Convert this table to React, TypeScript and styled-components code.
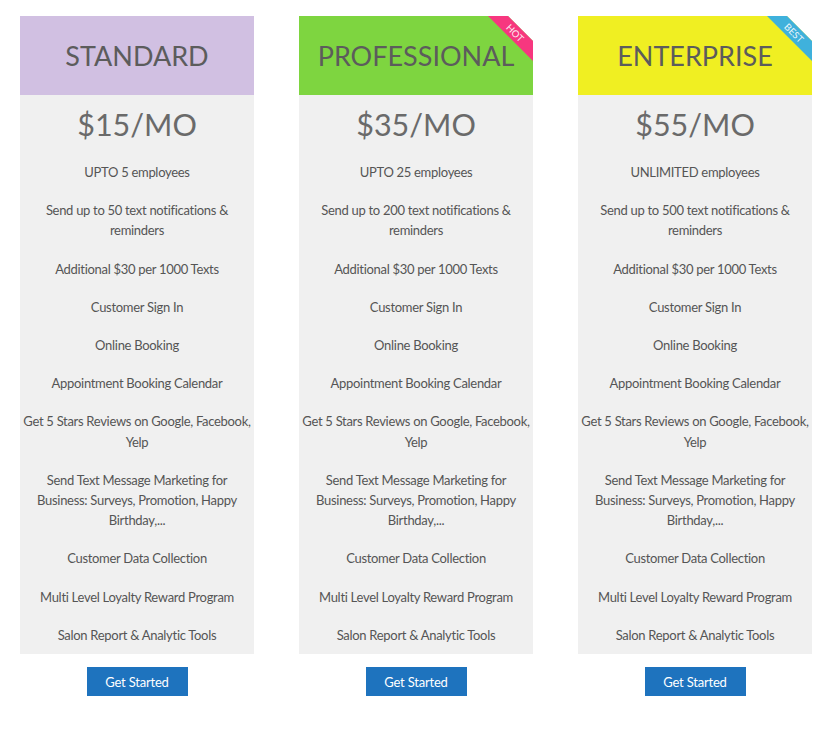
import React from "react";
import styled, { createGlobalStyle } from "styled-components";

const Global = createGlobalStyle`
  html, body { margin: 0; padding: 0; background: #fff; }
  body { font-family: Lato, "Open Sans", "Liberation Sans", sans-serif; }
`;

const Page = styled.div`
  display: grid;
  grid-template-columns: repeat(3, 234px);
  column-gap: 45px;
  padding: 16px 19px 0 20px;
  align-items: start;
`;

const Column = styled.div`
  display: flex;
  flex-direction: column;
  align-items: center;
`;

const Header = styled.div<{ $bg: string }>`
  position: relative;
  width: 100%;
  height: 79px;
  background: ${(p) => p.$bg};
  display: flex;
  align-items: center;
  justify-content: center;
  color: #5c5c5c;
  font-size: 27px;
`;

const Ribbon = styled.svg`
  position: absolute;
  top: 0;
  right: 0;
  width: 45px;
  height: 45px;
`;

const Body = styled.div`
  width: 100%;
  background: #f0f0f0;
  display: flex;
  flex-direction: column;
  align-items: center;
`;

const Price = styled.div`
  height: 58px;
  display: flex;
  align-items: center;
  justify-content: center;
  font-size: 30.5px;
  color: #6a6a6a;
`;

const Features = styled.ul`
  list-style: none;
  margin: 0;
  padding: 0;
  width: 100%;
`;

const Feature = styled.li`
  padding: 9px 0;
  font-size: 13px;
  letter-spacing: -0.3px;
  line-height: 20.2px;
  color: #555;
  text-align: center;
  white-space: nowrap;
`;

const Button = styled.button`
  margin-top: 13px;
  width: 101px;
  height: 29px;
  border: none;
  background: #1e73be;
  color: #fff;
  font-family: Lato, "Open Sans", sans-serif;
  font-size: 13px;
  letter-spacing: -0.2px;
  padding: 0;
  cursor: pointer;
`;

type Plan = {
  name: string;
  bg: string;
  price: string;
  employees: string;
  texts: string;
  ribbon?: { label: string; color: string };
};

const plans: Plan[] = [
  { name: "STANDARD", bg: "#d1c0e2", price: "$15/MO", employees: "UPTO 5 employees", texts: "50" },
  {
    name: "PROFESSIONAL",
    bg: "#7ed540",
    price: "$35/MO",
    employees: "UPTO 25 employees",
    texts: "200",
    ribbon: { label: "HOT", color: "#f7377f" },
  },
  {
    name: "ENTERPRISE",
    bg: "#f0ef22",
    price: "$55/MO",
    employees: "UNLIMITED employees",
    texts: "500",
    ribbon: { label: "BEST", color: "#3fb1dc" },
  },
];

function CornerRibbon({ label, color }: { label: string; color: string }) {
  return (
    <Ribbon viewBox="0 0 45 45">
      <polygon points="20,0 45,0 45,25" fill="#ffffff" />
      <polygon points="0,0 20,0 45,25 45,45" fill={color} />
      <text
        x="0"
        y="0"
        transform="translate(27 17) rotate(45)"
        textAnchor="middle"
        dominantBaseline="central"
        fill="#ffffff"
        fontSize="9.5"
        fontFamily="Lato, sans-serif"
        opacity="0.9"
      >
        {label}
      </text>
    </Ribbon>
  );
}

export default function App() {
  return (
    <>
      <Global />
      <Page>
        {plans.map((p) => (
          <Column key={p.name}>
            <Header $bg={p.bg}>
              {p.name}
              {p.ribbon && <CornerRibbon label={p.ribbon.label} color={p.ribbon.color} />}
            </Header>
            <Body>
              <Price>{p.price}</Price>
              <Features>
                <Feature>{p.employees}</Feature>
                <Feature>
                  Send up to {p.texts} text notifications &amp;
                  <br />
                  reminders
                </Feature>
                <Feature>Additional $30 per 1000 Texts</Feature>
                <Feature>Customer Sign In</Feature>
                <Feature>Online Booking</Feature>
                <Feature>Appointment Booking Calendar</Feature>
                <Feature>
                  Get 5 Stars Reviews on Google, Facebook,
                  <br />
                  Yelp
                </Feature>
                <Feature>
                  Send Text Message Marketing for
                  <br />
                  Business: Surveys, Promotion, Happy
                  <br />
                  Birthday,...
                </Feature>
                <Feature>Customer Data Collection</Feature>
                <Feature>Multi Level Loyalty Reward Program</Feature>
                <Feature>Salon Report &amp; Analytic Tools</Feature>
              </Features>
            </Body>
            <Button>Get Started</Button>
          </Column>
        ))}
      </Page>
    </>
  );
}
